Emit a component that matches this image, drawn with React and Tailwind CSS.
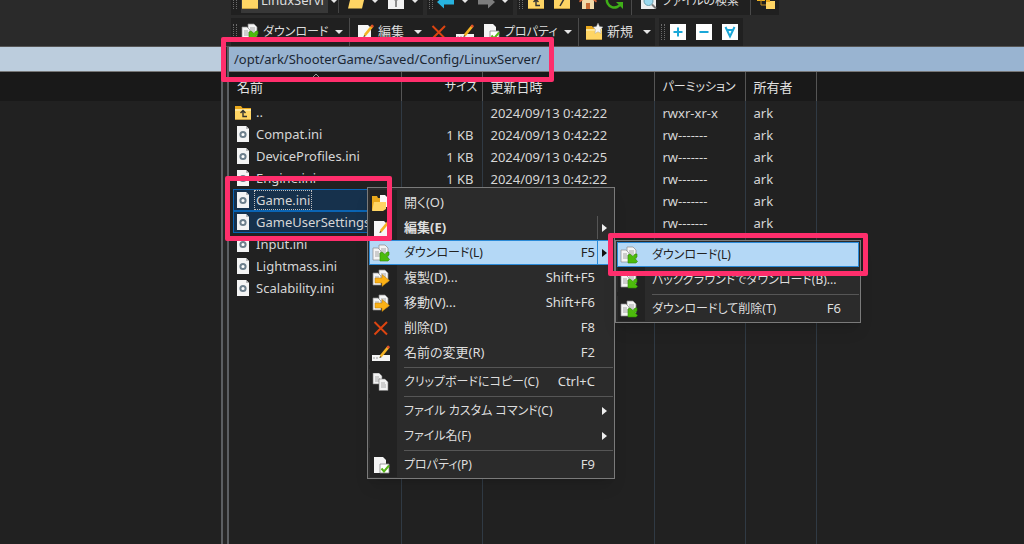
const files = [
  { name: '..', size: '', date: '2024/09/13 0:42:22', perm: 'rwxr-xr-x' },
  { name: 'Compat.ini', size: '1 KB', date: '2024/09/13 0:42:22', perm: 'rw-------' },
  { name: 'DeviceProfiles.ini', size: '1 KB', date: '2024/09/13 0:42:25', perm: 'rw-------' },
  { name: 'Engine.ini', size: '1 KB', date: '2024/09/13 0:42:22', perm: 'rw-------' },
  { name: 'Game.ini', size: '1 KB', date: '2024/09/13 0:42:22', perm: 'rw-------', selected: true, focused: true },
  { name: 'GameUserSettings.ini', size: '1 KB', date: '2024/09/13 0:42:22', perm: 'rw-------', selected: true },
  { name: 'Input.ini', size: '1 KB', date: '2024/09/13 0:42:22', perm: 'rw-------' },
  { name: 'Lightmass.ini', size: '1 KB', date: '2024/09/13 0:42:22', perm: 'rw-------' },
  { name: 'Scalability.ini', size: '1 KB', date: '2024/09/13 0:42:22', perm: 'rw-------' },
]

const contextMenu = [
  { label: '開く(O)', icon: 'open' },
  { label: '編集(E)', icon: 'edit', bold: true, submenu: true, split: true },
  { label: 'ダウンロード(L)', icon: 'download', keys: 'F5', submenu: true, split: true, active: true, kana: true },
  { label: '複製(D)...', icon: 'move', keys: 'Shift+F5' },
  { label: '移動(V)...', icon: 'move', keys: 'Shift+F6' },
  { label: '削除(D)', icon: 'delete', keys: 'F8' },
  { label: '名前の変更(R)', icon: 'rename', keys: 'F2' },
  null,
  { label: 'クリップボードにコピー(C)', icon: 'copy', keys: 'Ctrl+C', kana: true },
  null,
  { label: 'ファイル カスタム コマンド(C)', submenu: true, kana: true },
  { label: 'ファイル名(F)', submenu: true, kana: true },
  null,
  { label: 'プロパティ(P)', icon: 'props', keys: 'F9', kana: true },
]

const downloadMenu = [
  { label: 'ダウンロード(L)', icon: 'download', active: true, kana: true },
  { label: 'バックグラウンドでダウンロード(B)...', icon: 'download', kana: true },
  null,
  { label: 'ダウンロードして削除(T)', icon: 'download', keys: 'F6', kana: true },
]

const folder = (
  <>
    <path d="M1 3h6l1.500 2H17v11.500H1z" fill="#e9a81c" />
    <path d="M1 6h16v10.500H1z" fill="#ffd564" />
    <path d="M1 6h16v2H1z" fill="#ffe596" />
  </>
)

const sheets = (
  <>
    <path d="M7 1h6l3 3v9H7z" fill="#f5f5f5" stroke="#8b8b8b" strokeWidth=".7" />
    <path d="M9 5h5M9 7h5M9 9h5" stroke="#a5a5a5" />
    <path d="M1 4h5l3 3v9H1z" fill="#f5f5f5" stroke="#8b8b8b" strokeWidth=".7" />
    <path d="M3 8h4M3 10h5M3 12h5" stroke="#a5a5a5" />
  </>
)

const pencil = (
  <>
    <path d="M7.500 14l1-3.500 7-8.500 2 1.800-7 8.400z" fill="#f5b324" />
    <path d="M14.500 3.200L16 1.200l2 1.800-1.500 2z" fill="#e2502a" />
    <path d="M7.500 14l.6-2 1.500 1.200z" fill="#444" />
  </>
)

const icons = {
  folder,
  up: <>{folder}<path d="M13 13.500H9V8M6.500 10L9 7.500l2.500 2.500" fill="none" stroke="#333" strokeWidth="1.400" /></>,
  root: <>{folder}<path d="M7 14l4-7" fill="none" stroke="#333" strokeWidth="1.500" /></>,
  open: (
    <>
      <path d="M0 2h5l1 2h6v12H0z" fill="#e9a81c" />
      <path d="M8 1h5l3 3v9H8z" fill="#fafafa" />
      <path d="M0 17l2-9h12v7l-3 2z" fill="#ffd564" />
    </>
  ),
  openFolder: (
    <>
      <path d="M2 2h6l1 2h8v4H2z" fill="#e9a81c" />
      <path d="M1 16.500L4 4h14l-3 12.500z" fill="#ffd564" />
    </>
  ),
  filter: (
    <>
      <path d="M1 1h16v16H1z" fill="#f2f2f2" />
      <path d="M4 4h10l-4 5v6H8V9z" fill="#8c8c8c" />
    </>
  ),
  edit: <><path d="M2 2h10l3 3v12H2z" fill="#f7f7f7" />{pencil}</>,
  download: <>{sheets}<path d="M17 8v3l-2 1.500 2.500 3L16 17H8V9l2-1 3 2.500L15 8z" fill="#4dbb0c" stroke="#2e8a05" strokeWidth=".6" /></>,
  move: <>{sheets}<path d="M3 9h7V5.500l7.500 6-7.500 6V14H3z" fill="#fbb116" stroke="#b77a0b" strokeWidth=".5" /></>,
  delete: <path d="M2.500 3L15 15.500M15 3L2.500 15.500" stroke="#dc4410" strokeWidth="2" />,
  rename: <><path d="M0 11h18v6H0z" fill="#f4f4f4" /><path d="M2 13v2M5 13v2" stroke="#999" />{pencil}</>,
  copy: (
    <>
      <path d="M1 0h6l3 3v8H1z" fill="#f2f2f2" stroke="#777" strokeWidth=".6" />
      <path d="M3 4h4M3 6h5M3 8h5" stroke="#aaa" />
      <path d="M7 6h6l3 3v8.500H7z" fill="#f2f2f2" stroke="#777" strokeWidth=".6" />
      <path d="M9 10h4M9 12h5M9 14h5" stroke="#aaa" />
    </>
  ),
  props: (
    <>
      <path d="M2 1h9l3 3v13H2z" fill="#f4f4f4" />
      <path d="M8 8h9v9H8z" fill="#fff" stroke="#888" strokeWidth=".8" />
      <path d="M9.500 12.500l2.500 3 5-6" fill="none" stroke="#58b51b" strokeWidth="2" />
    </>
  ),
  back: <path d="M0 10l7-6v4h10v4.500H7v4z" fill="#27b3df" />,
  forward: <path d="M18 10l-7-6v4H1v4.500h10v4z" fill="#7d7d7d" />,
  home: (
    <>
      <path d="M3 8h12v9H3z" fill="#f1d9a8" />
      <path d="M0 9l9-8 9 8-1 1.500L9 4l-8 6.500z" fill="#d8683a" />
      <path d="M7 11h4v6H7z" fill="#c76a33" />
    </>
  ),
  refresh: (
    <>
      <path d="M2 6.500a7.500 7.500 0 0 0 14 5" fill="none" stroke="#3fae18" strokeWidth="2.500" />
      <path d="M11 10h7v7z" fill="#3fae18" />
    </>
  ),
  search: (
    <>
      <path d="M1 1h12l3 3v13H1z" fill="#eee" />
      <circle cx="8.500" cy="9" r="4.500" fill="#9bd9ee" stroke="#6d9fae" />
      <path d="M12 12.500l4 4" stroke="#777" strokeWidth="2" />
    </>
  ),
  tree: (
    <>
      <path d="M0 4h8v5H0z" fill="#f0b323" />
      <path d="M4 8v5h5" fill="none" stroke="#c58c1a" />
      <path d="M9 9h9v8H9z" fill="#ffd564" />
      <path d="M9 8h4v2H9z" fill="#e9a81c" />
    </>
  ),
  newFolder: <>{folder}<path d="M13 0l1.600 3.600 3.400.4-2.500 2.600.6 3.900L13 8.700l-3.100 1.800.6-3.900L8 4l3.400-.4z" fill="#f5f5f5" stroke="#999" strokeWidth=".4" /></>,
  plus: <><path d="M1 1h16v16H1z" fill="#fff" /><path d="M9 4.500v9M4.500 9h9" stroke="#1aa7d8" strokeWidth="2" /></>,
  minus: <><path d="M1 1h16v16H1z" fill="#fff" /><path d="M4.500 9h9" stroke="#1aa7d8" strokeWidth="2" /></>,
  invert: <><path d="M1 1h16v16H1z" fill="#fff" /><path d="M4.500 4L9 13.500 13.500 4M5.500 7h7" fill="none" stroke="#1aa7d8" strokeWidth="2" /></>,
  ini: (
    <>
      <path d="M3 1h9l3 3v13H3z" fill="#f4f4f4" />
      <path d="M12 1v3h3z" fill="#b9b9b9" />
      <circle cx="9" cy="9.500" r="2.600" fill="#fff" stroke="#6d7f8c" strokeWidth="2" />
    </>
  ),
}

function Icon({ name }) {
  return (
    <svg viewBox="0 0 18 18" className="h-[18px] w-[18px] shrink-0" aria-hidden="true">
      {icons[name]}
    </svg>
  )
}

function Caret() {
  return (
    <svg viewBox="0 0 8 4" className="h-1 w-2 shrink-0" aria-hidden="true">
      <path d="M0 0h8L4 4z" fill="#e6e6e6" />
    </svg>
  )
}

function Grip() {
  return <span className="-mr-1 h-4 w-1 shrink-0 border-x border-dotted border-[#6b6b6b]" />
}

function Divider({ className = '' }) {
  return <span className={`h-7 w-px shrink-0 bg-[#4a4a4a] ${className}`} />
}

function Tool({ icon, title, children, caret, className = '' }) {
  return (
    <button type="button" aria-label={title} className={`flex shrink-0 items-center gap-1 ${className}`}>
      <Icon name={icon} />
      {children && <span className="flex-1 text-left whitespace-nowrap">{children}</span>}
      {caret && <Caret />}
    </button>
  )
}

function ToolGroup({ children }) {
  return <div className="flex h-7 shrink-0 items-center gap-2 bg-[#202020] pr-1 pl-0.5">{children}</div>
}

function Toolbars() {
  return (
    <div className="flex h-[47px] flex-col justify-end gap-[3px] overflow-hidden border-b border-[#555] bg-[#2a2a2a] pl-[10px] text-[13px] text-[#dcdcdc]">
      <div className="flex shrink-0 gap-1">
        <ToolGroup>
          <Grip />
          <button type="button" className="flex h-6 w-[98px] items-center gap-0.5 border-r border-[#444]">
            <span className="flex h-6 flex-1 items-center gap-0.5 bg-[#383838]">
              <Icon name="folder" />
              <span className="whitespace-nowrap">LinuxServi</span>
            </span>
            <Caret />
          </button>
          <Tool icon="openFolder" title="Open directory" caret className="w-8 justify-between" />
          <Tool icon="filter" title="Filter" caret className="w-8 justify-between" />
        </ToolGroup>
        <ToolGroup>
          <Grip />
          <Tool icon="back" title="Back" caret className="w-8 justify-between" />
          <Tool icon="forward" title="Forward" caret className="w-8 justify-between" />
        </ToolGroup>
        <ToolGroup>
          <Grip />
          <Tool icon="up" title="Parent directory" />
          <Tool icon="root" title="Root directory" />
          <Tool icon="home" title="Home directory" />
          <Tool icon="refresh" title="Refresh" />
          <Divider />
          <Tool icon="search" className="w-[102px]"><span className="text-[12px]">ファイルの検索</span></Tool>
          <Divider className="-mr-0.5" />
          <Tool icon="tree" title="Directory tree" />
        </ToolGroup>
      </div>
      <div className="flex shrink-0 gap-1">
        <ToolGroup>
          <Grip />
          <Tool icon="download" caret className="w-[102px]"><span className="text-[12px]">ダウンロード</span></Tool>
          <Divider className="-mx-0.5" />
          <Tool icon="edit" caret className="w-[66px]">編集</Tool>
          <Tool icon="delete" title="Delete" />
          <Tool icon="rename" title="Rename" />
          <Tool icon="props" caret className="w-[90px]"><span className="text-[12px]">プロパティ</span></Tool>
          <Divider className="-mx-0.5" />
          <Tool icon="newFolder" caret className="w-[66px]">新規</Tool>
        </ToolGroup>
        <ToolGroup>
          <Grip />
          <Tool icon="plus" title="Select files" />
          <Tool icon="minus" title="Unselect files" />
          <Tool icon="invert" title="Invert selection" />
        </ToolGroup>
      </div>
    </div>
  )
}

function FileRow({ file }) {
  const cell = 'border-r border-[#303a44] px-2 pt-0.5 pb-0 whitespace-nowrap'
  return (
    <tr className="h-[22px]">
      <td className="border-r border-[#303a44] py-0 pr-0 pl-1">
        <div
          className={`flex h-[22px] items-center gap-0.5 overflow-hidden border ${
            file.selected ? 'border-[#0a64b4] bg-[#16314c]' : 'border-transparent'
          }`}
        >
          <Icon name={file.name === '..' ? 'up' : 'ini'} />
          <span className={`border border-dotted px-px leading-[18px] whitespace-nowrap ${file.focused ? 'border-[#c0c0c0]' : 'border-transparent'}`}>
            {file.name}
          </span>
        </div>
      </td>
      <td className={`${cell} text-right`}>{file.size}</td>
      <td className={cell}>{file.date}</td>
      <td className={cell}>{file.perm}</td>
      <td className={cell}>ark</td>
      <td />
    </tr>
  )
}

function FileTable() {
  const head = 'border-r border-[#555] py-0 pr-1 pl-2 text-left font-normal whitespace-nowrap'
  return (
    <table className="w-full flex-1 table-fixed border-collapse text-[13px] leading-5 text-[#d6d6d6]">
      <thead className="bg-[#191919] text-[#e2e2e2]">
        <tr className="h-[29px]">
          <th className={`${head} relative w-[172px]`}>
            名前
            <svg viewBox="0 0 8 4" className="absolute top-0.5 left-[83px] h-1 w-2" aria-hidden="true">
              <path d="M0 4l4-4 4 4" fill="none" stroke="#999" />
            </svg>
          </th>
          <th className={`${head} w-[81px]`}><span className="block text-right text-[12px]">サイズ</span></th>
          <th className={`${head} w-[172px]`}>更新日時</th>
          <th className={`${head} w-[91px]`}><span className="text-[12px]">パーミッション</span></th>
          <th className={`${head} w-[71px]`}>所有者</th>
          <th />
        </tr>
      </thead>
      <tbody>
        {files.map((file) => (
          <FileRow key={file.name} file={file} />
        ))}
        {/* carries the column lines down to the bottom of the panel */}
        <tr>
          <td className="border-r border-[#303a44]" />
          <td className="border-r border-[#303a44]" />
          <td className="border-r border-[#303a44]" />
          <td className="border-r border-[#303a44]" />
          <td className="border-r border-[#303a44]" />
          <td />
        </tr>
      </tbody>
    </table>
  )
}

function Menu({ items, label, className }) {
  return (
    <div role="menu" aria-label={label} className={`absolute border border-[#7a7a7a] bg-[#2b2b2b] p-px text-[13px] text-[#dedede] shadow-lg ${className}`}>
      {items.map((item, i) =>
        item ? (
          <button
            key={item.label}
            type="button"
            role="menuitem"
            className={`flex h-[25px] w-full items-center border text-left ${
              item.active ? 'border-[#2a8ad8] bg-[#b4d8f6] text-[#222]' : 'border-transparent'
            }`}
          >
            <span className={`flex h-[25px] w-[27px] shrink-0 items-center pl-0.5 ${item.active ? '' : 'bg-[#222]'}`}>
              {item.icon && <Icon name={item.icon} />}
            </span>
            <span className={`flex-1 pl-[7px] whitespace-nowrap ${item.kana ? 'text-[12px]' : ''} ${item.bold ? 'font-bold' : ''}`}>{item.label}</span>
            <span className="whitespace-nowrap">{item.keys}</span>
            <span className={`ml-0.5 flex h-[23px] w-[15px] shrink-0 items-center border-l pl-1 ${item.split ? (item.active ? 'border-[#2a8ad8]' : 'border-[#555]') : 'border-transparent'}`}>
              {item.submenu && (
                <svg viewBox="0 0 5 8" className="h-2 w-[5px]" aria-hidden="true">
                  <path d="M0 0l5 4-5 4z" fill={item.active ? '#111' : '#eee'} />
                </svg>
              )}
            </span>
          </button>
        ) : (
          <div key={i} role="separator" className="flex h-1 items-center">
            <span className="h-1 w-7 bg-[#222]" />
            <span className="ml-[7px] h-px flex-1 bg-[#565656]" />
          </div>
        )
      )}
    </div>
  )
}

function Marker({ className }) {
  return <div className={`pointer-events-none absolute rounded-xs border-[5px] border-[#ff2e6c] ${className}`} />
}

export default function App() {
  return (
    <div className="relative flex min-h-screen overflow-hidden bg-[#212121] font-['Noto_Sans','Noto_Sans_CJK_JP',sans-serif] [font-feature-settings:'palt']">
      <section className="flex w-[221px] shrink-0 flex-col">
        <div className="h-[47px] border-b border-[#555] bg-[#2a2a2a]" />
        <div className="h-[25px] border-b border-[#777] bg-[#bccddd]" />
        <div className="h-[29px] bg-[#191919]" />
      </section>
      <main className="flex min-w-0 flex-1 flex-col">
        <Toolbars />
        <div className="flex flex-1">
          <div className="w-2 shrink-0 border-x-2 border-[#5c5f63] bg-[#262626]" />
          <div className="flex min-w-0 flex-1 flex-col">
            <div className="flex h-[25px] items-center border-b border-[#777] bg-[#99b4d1] pt-0.5 pl-[5px] text-[13px] text-[#1c2733]">
              /opt/ark/ShooterGame/Saved/Config/LinuxServer/
            </div>
            <FileTable />
          </div>
        </div>
      </main>

      <Menu items={contextMenu} label="File" className="top-[187px] left-[367px] w-[248px] pt-0.5" />
      <Menu items={downloadMenu} label="Download" className="top-[240px] left-[615px] w-[246px]" />

      <Marker className="top-[37px] left-[221px] h-[45px] w-[333px]" />
      <Marker className="top-[176px] left-[225px] h-[65px] w-[167px]" />
      <Marker className="top-[233px] left-[608px] h-[43px] w-[260px]" />
    </div>
  )
}
